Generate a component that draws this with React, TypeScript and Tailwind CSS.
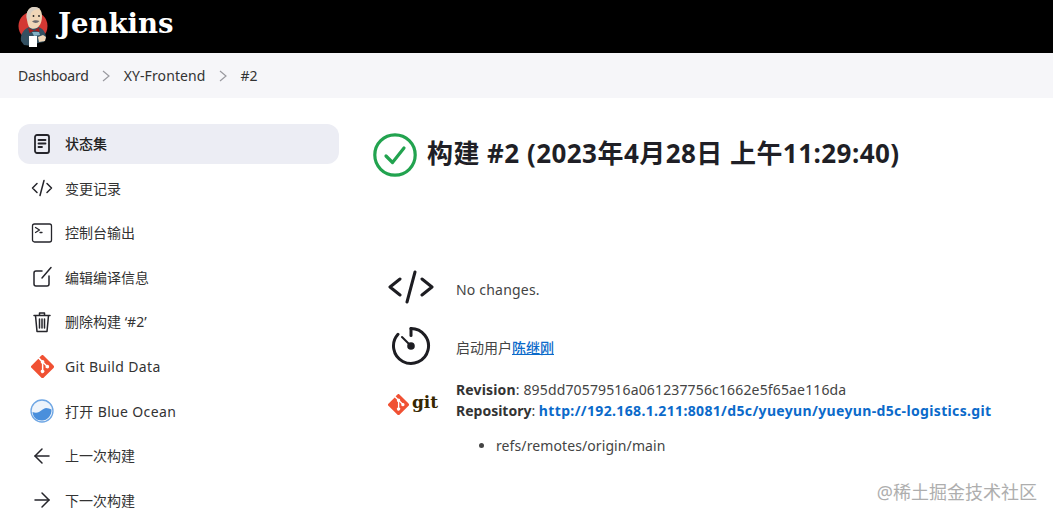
import React from 'react';
import { ArrowLeft, ArrowRight } from 'lucide-react';

const FONT = "font-['Noto_Sans','Noto_Sans_CJK_SC',sans-serif]";

const GitDiamond = ({ size }: { size: number }) => (
  <svg width={size} height={size} viewBox="0 0 92 92">
    <path
      fill="#f05133"
      d="M90.2 41.9 50.1 1.8a5.9 5.9 0 0 0-8.4 0l-8.3 8.3 10.6 10.6a7 7 0 0 1 8.9 9l10.2 10.2a7 7 0 1 1-4.2 4l-9.5-9.5v25a7 7 0 1 1-5.8-.2V34.9a7 7 0 0 1-3.8-9.2L29.4 15.3 1.8 42.9a5.9 5.9 0 0 0 0 8.4l40.1 40.1a5.9 5.9 0 0 0 8.4 0l39.9-39.9a5.9 5.9 0 0 0 0-8.6z"
    />
  </svg>
);

const JenkinsLogo = () => (
  <svg width="30" height="41" viewBox="0 0 30 41">
    <circle cx="15" cy="20" r="14.500" fill="#d33833" />
    <path d="M3 35c-1-7 3-12 8-14l9 0c5 1 8 6 8 11l-2 4-6 1-6 3-8-1z" fill="#335061" />
    <path d="M9 12c-1-7 2-11 7-11 5 0 8 3 8 9 0 4-1 8-3 10-2 3-7 4-10 1-1-2-2-5-2-9z" fill="#f0d6b7" />
    <path d="M9 14c-2-7 2-13 7-13 3 0 5 1 6 2-4 0-7 1-9 4-1 2 0 5-2 7-1 1-2 1-2 0z" fill="#d9cfc2" />
    <circle cx="15.500" cy="10" r=".9" fill="#222" />
    <circle cx="21" cy="10" r=".9" fill="#222" />
    <path d="M14 15.500c2-1.500 5-1.500 7.500-.5-2 2.500-5 2.500-7.500.5z" fill="#6d6b6d" />
    <path d="M10 22l6 2.500 5-3 .5 4.500-5-1.500-5 2.500z" fill="#a51c1c" />
    <path d="M14 26l7 0 1 3-6 1z" fill="#81b0c4" />
    <rect x="11" y="30" width="8" height="11" fill="#fff" />
    <path d="M20 31l5-2 3 2-1 4-6 1z" fill="#f0d6b7" />
  </svg>
);

const BlueOcean = () => (
  <svg width="24" height="24" viewBox="0 0 24 24">
    <circle cx="12" cy="12" r="11" fill="#eef4fb" stroke="#6ea6e4" strokeWidth="1.300" />
    <path d="M2.500 13c2.500 1 4.500 1 6.500 0 2.500-1.300 5-4 7-4 2 0 4 1 5.500 1.500.3 6-4 11-9.500 11S3 18 2.500 13z" fill="#4a8fdc" />
  </svg>
);

const SideIcon = ({ kind }: { kind: string }) => {
  const stroke = { fill: 'none', stroke: '#25252b', strokeLinecap: 'round', strokeLinejoin: 'round' } as const;
  switch (kind) {
    case 'status':
      return (
        <svg width="24" height="24" viewBox="0 0 24 24" {...stroke} strokeWidth="1.800">
          <rect x="5" y="3" width="14" height="18" rx="2" />
          <path d="M8.500 8h7M8.500 11.500h7M8.500 15h3.500" />
        </svg>
      );
    case 'code':
      return (
        <svg width="24" height="24" viewBox="0 0 24 24" {...stroke} strokeWidth="1.500">
          <path d="M7 7.500 2.500 12 7 16.500M17 7.500l4.500 4.500-4.500 4.500M14 4.500 10 19.500" />
        </svg>
      );
    case 'console':
      return (
        <svg width="24" height="24" viewBox="0 0 24 24" {...stroke} strokeWidth="1.300">
          <rect x="2.500" y="3" width="19" height="18" rx="2" />
          <path d="m5.500 6.500 4 2.500-4 2.500M10 11.500h2" />
        </svg>
      );
    case 'edit':
      return (
        <svg width="24" height="24" viewBox="0 0 24 24" {...stroke} strokeWidth="1.500">
          <path d="M12 6H6a2 2 0 0 0-2 2v11a2 2 0 0 0 2 2h11a2 2 0 0 0 2-2v-8" />
          <path d="M12 13 21 2.500" />
        </svg>
      );
    case 'trash':
      return (
        <svg width="24" height="24" viewBox="0 0 24 24" {...stroke} strokeWidth="1.500">
          <path d="M4 5.500h16M9.500 5.500V3h5v2.500M5.500 5.500 7 21.500h10l1.500-16M9.500 9v9M12 9v9M14.500 9v9" />
        </svg>
      );
    case 'git':
      return <GitDiamond size={23} />;
    case 'ocean':
      return <BlueOcean />;
    case 'prev':
      return <ArrowLeft size={24} strokeWidth={1.500} color="#25252b" />;
    default:
      return <ArrowRight size={24} strokeWidth={1.500} color="#25252b" />;
  }
};

const tasks = [
  { kind: 'status', label: '状态集', active: true },
  { kind: 'code', label: '变更记录' },
  { kind: 'console', label: '控制台输出' },
  { kind: 'edit', label: '编辑编译信息' },
  { kind: 'trash', label: "删除构建 ‘#2’" },
  { kind: 'git', label: 'Git Build Data', wide: true },
  { kind: 'ocean', label: '打开 Blue Ocean', wide: true },
  { kind: 'prev', label: '上一次构建' },
  { kind: 'next', label: '下一次构建' },
];

const Chevron = () => (
  <svg width="8" height="12" viewBox="0 0 8 12" fill="none" stroke="#9a9aa0" strokeWidth="1.200">
    <path d="m1 1 6 5-6 5" />
  </svg>
);

export default function App() {
  return (
    <div className={`${FONT} relative h-[519px] overflow-hidden bg-white text-[14px] text-[#333]`}>
      {/* Header */}
      <header className="flex h-[53px] items-center bg-black pl-[18px]">
        <JenkinsLogo />
        <span className="ml-[10px] mt-[-5px] font-['DejaVu_Serif',serif] text-[27.500px] font-bold leading-none text-white">
          Jenkins
        </span>
      </header>

      {/* Breadcrumbs */}
      <nav className="flex h-[45px] items-center bg-[#f6f6f9] pl-[18px] text-[#333]">
        <span className="tracking-[-0.2px]">Dashboard</span>
        <span className="ml-[13px] mr-[14px]"><Chevron /></span>
        <span className="tracking-[0.1px]">XY-Frontend</span>
        <span className="ml-[13px] mr-[14px]"><Chevron /></span>
        <span>#2</span>
      </nav>

      <div className="flex pl-[18px] pt-[25.6px]">
        {/* Sidebar */}
        <aside className="flex w-[321px] shrink-0 flex-col gap-[4.6px]">
          {tasks.map((t) => (
            <div
              key={t.label}
              className={`flex h-10 items-center rounded-[12px] pl-[12px] ${t.active ? 'bg-[#ecedf4] font-medium text-[#222]' : ''}`}
            >
              <span className="flex w-[24px] items-center justify-center"><SideIcon kind={t.kind} /></span>
              <span className={`ml-[11px] ${t.wide ? 'tracking-[0.35px]' : ''}`}>{t.label}</span>
            </div>
          ))}
        </aside>

        {/* Main */}
        <main className="ml-[34px] min-w-0 flex-1">
          <div className="mt-[9px] flex items-center gap-[10px]">
            <svg width="44" height="44" viewBox="0 0 44 44" fill="none" stroke="#22a34f" strokeWidth="3.200" strokeLinecap="round" strokeLinejoin="round">
              <circle cx="22" cy="22" r="20.200" />
              <path d="m13 23 6.500 6.500L31 15" />
            </svg>
            <h1 className="mt-[-4px] whitespace-nowrap text-[26px] font-bold leading-[44px] tracking-[0.45px] text-[#1f1f26]">
              构建 #2 (2023年4月28日 上午11:29:40)
            </h1>
          </div>

          <div className="mt-[90px] flex h-[40px] items-center">
            <span className="flex w-[83px] justify-center pr-[7px]">
              <svg width="46" height="34" viewBox="0 0 46 34" fill="none" stroke="#1d1d22" strokeWidth="3" strokeLinecap="round" strokeLinejoin="round">
                <path d="M12 9 2 17l10 8M34 9l10 8-10 8M27 2l-8 30" />
              </svg>
            </span>
            <span className="mt-[6px] tracking-[0.2px] text-[#444]">No changes.</span>
          </div>

          <div className="mt-[18px] flex h-[42px] items-center">
            <span className="flex w-[83px] justify-center pr-[7px]">
              <svg width="40" height="40" viewBox="0 0 40 40" fill="none" stroke="#1d1d22" strokeWidth="3" strokeLinecap="round">
                <path d="M20 2.500a17.500 17.500 0 1 1-13 5.800" />
                <path d="M20 2.500v7" />
                <path d="m11 11 9 9" strokeWidth="2" />
                <circle cx="20" cy="20" r="2.300" fill="#1d1d22" />
              </svg>
            </span>
            <span className="mt-[4px] text-[#444]">
              启动用户<a className="font-medium text-[#0b6aca] underline">陈继刚</a>
            </span>
          </div>

          <div className="mt-[12px] flex">
            <span className="flex w-[83px] items-center justify-center pr-[3px] pt-[10px]">
              <span className="flex items-center">
                <GitDiamond size={21} />
                <span className="ml-[3px] mt-[-4px] font-['DejaVu_Serif',serif] text-[17px] font-bold leading-none text-[#362701]">git</span>
              </span>
            </span>
            <div className="leading-[21px]">
              <div className="whitespace-nowrap tracking-[0.15px] text-[#444]"><b className="text-[#333]">Revision</b>: 895dd70579516a061237756c1662e5f65ae116da</div>
              <div className="whitespace-nowrap text-[#444]"><b className="text-[#333]">Repository</b>: <a className="font-bold tracking-[0.35px] text-[#0b6aca]">http://192.168.1.211:8081/d5c/yueyun/yueyun-d5c-logistics.git</a></div>
            </div>
          </div>

          <ul className="ml-[123px] mt-[14px] list-disc tracking-[0.1px] text-[#444]">
            <li>refs/remotes/origin/main</li>
          </ul>
        </main>
      </div>

      {/* Watermark */}
      <span className="absolute bottom-[18px] right-[16px] text-[18px] leading-none text-[#aeaeae]">@稀土掘金技术社区</span>
    </div>
  );
}
